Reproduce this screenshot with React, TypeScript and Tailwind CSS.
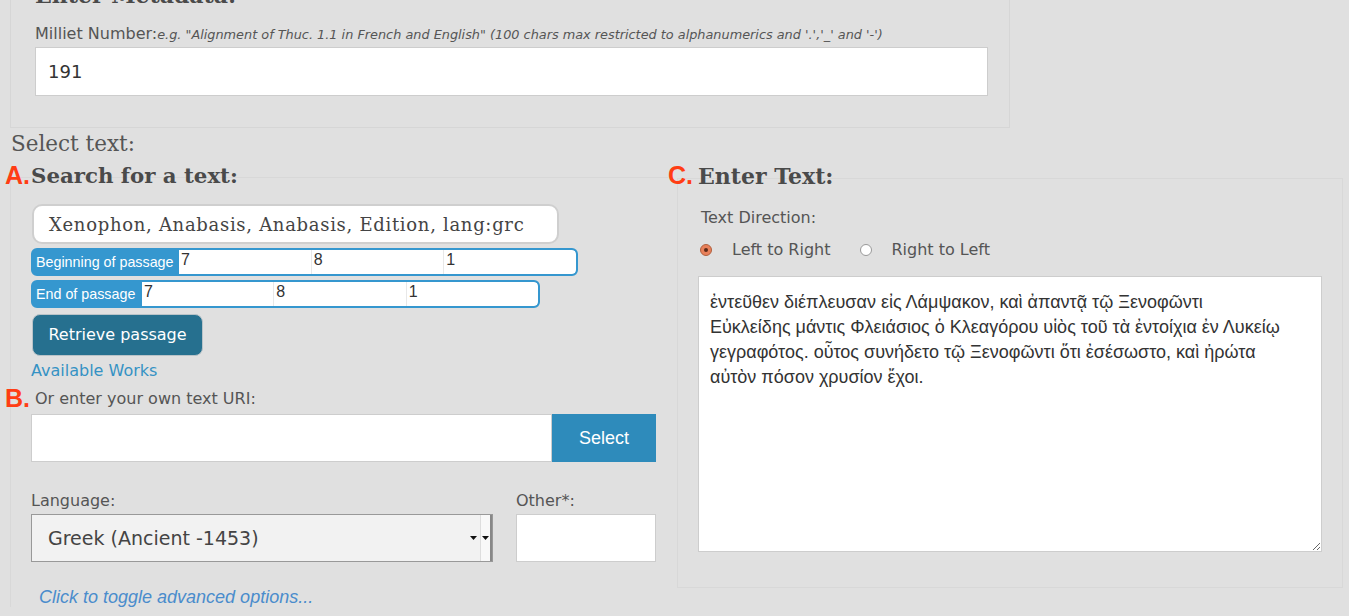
import React, { useState } from "react";

const sans = "font-['DejaVu_Sans',sans-serif]";
const serif = "font-['DejaVu_Serif',serif]";
const arial = "font-['Liberation_Sans',Arial,sans-serif]";

const greek = [
  "ἐντεῦθεν διέπλευσαν εἰς Λάμψακον, καὶ ἀπαντᾷ τῷ Ξενοφῶντι",
  "Εὐκλείδης μάντις Φλειάσιος ὁ Κλεαγόρου υἱὸς τοῦ τὰ ἐντοίχια ἐν Λυκείῳ",
  "γεγραφότος. οὗτος συνήδετο τῷ Ξενοφῶντι ὅτι ἐσέσωστο, καὶ ἠρώτα",
  "αὐτὸν πόσον χρυσίον ἔχοι.",
].join("\n");

// passage bar: label + three citation inputs
const PassageBar = ({ label, width, labelWidth, values }: { label: string; width: string; labelWidth: string; values: string[] }) => (
  <div className={`flex h-[28px] ${width} rounded-[6px] border-2 border-[#3597cf] bg-[#3597cf] overflow-hidden`}>
    <div className={`${labelWidth} shrink-0 flex items-end pb-[1px] pl-[3px] text-white text-[14.3px] ${arial}`}>{label}</div>
    <div className="flex flex-1 bg-white rounded-r-[4px]">
      {values.map((v, i) => (
        <div key={i} className={`flex-1 text-[16px] leading-[20px] pl-[2px] text-[#333] ${arial} ${i > 0 ? "border-l border-[#e8e8e8]" : ""}`}>
          {v}
        </div>
      ))}
    </div>
  </div>
);

const Letter = ({ children }: { children: string }) => (
  <span className={`text-[25px] font-bold text-[#ff3d14] ${arial}`}>{children}</span>
);

const Radio = ({ on }: { on: boolean }) => (
  <span className={`w-[12px] h-[12px] rounded-full border flex items-center justify-center ${on ? "bg-[#e8805a] border-[#b0603e]" : "bg-white border-[#999]"}`}>
    {on && <span className="w-[4px] h-[4px] rounded-full bg-[#5a2a18]" />}
  </span>
);

export default function App() {
  const [dir, setDir] = useState("ltr");

  return (
    <div className="flex flex-col w-full h-[616px] overflow-hidden bg-[#e0e0e0] text-[#555]">
      {/* metadata panel */}
      <div className="flex flex-col items-start ml-[10px] w-[1000px] h-[128px] shrink-0 border-x border-b border-[#d6d6d6] pl-[24px]">
        <h2 className={`-mt-[19px] h-[28px] leading-[28px] text-[22px] font-bold text-[#4a4a4a] ${serif}`}>Enter Metadata:</h2>
        <div className={`mt-[15px] h-[20px] leading-[20px] text-[16px] ${sans}`}>
          Milliet Number:
          <span className="italic text-[12.85px]">e.g. "Alignment of Thuc. 1.1 in French and English" (100 chars max restricted to alphanumerics and '.','_' and '-')</span>
        </div>
        <input
          defaultValue="191"
          className={`mt-[3px] h-[49px] w-[953px] bg-white border border-[#cdcdcd] px-[12px] text-[18px] text-[#333] ${sans} outline-none`}
        />
      </div>

      <div className={`mt-[4px] pl-[11px] h-[24px] leading-[24px] text-[21.5px] ${serif}`}>Select text:</div>

      <div className="flex mt-[6px]">
        {/* left column */}
        <div className="w-[668px] shrink-0">
          <div className="flex items-center h-[28px] pl-[5px]">
            <Letter>A.</Letter>
            <h3 className={`ml-[1px] text-[21.3px] font-bold text-[#4a4a4a] ${serif}`}>Search for a text:</h3>
          </div>
          <div className="ml-[10px] -mt-[13px] pt-[26px] pl-[20px] border-l border-t border-[#d8d8d8]">
            <div className={`ml-[1px] h-[40px] w-[527px] rounded-[10px] border-2 border-[#cfcfcf] bg-white pl-[15px] flex items-center text-[18px] tracking-[0.7px] text-[#444] ${serif}`}>
              Xenophon, Anabasis, Anabasis, Edition, lang:grc
            </div>
            <div className="mt-[4px]">
              <PassageBar label="Beginning of passage" width="w-[547px]" labelWidth="w-[146px]" values={["7", "8", "1"]} />
            </div>
            <div className="mt-[4px]">
              <PassageBar label="End of passage" width="w-[509px]" labelWidth="w-[109px]" values={["7", "8", "1"]} />
            </div>
            <button className={`mt-[6px] ml-[1px] h-[42px] w-[171px] rounded-[8px] border border-[#b9c3c8] bg-[#26708f] text-white text-[16px] ${sans}`}>
              Retrieve passage
            </button>
            <div className={`mt-[5px] h-[20px] leading-[20px] text-[16px] text-[#3592c4] ${sans}`}>Available Works</div>

            <div className="flex items-center mt-[7px] -ml-[26px] h-[22px]">
              <Letter>B.</Letter>
              <span className={`ml-[5px] text-[16px] ${sans}`}>Or enter your own text URI:</span>
            </div>
            <div className="flex mt-[4px]">
              <input className="h-[48px] w-[521px] bg-white border border-[#cdcdcd] outline-none" />
              <button className={`h-[48px] w-[104px] bg-[#2e8bbb] text-white text-[18px] ${arial}`}>Select</button>
            </div>

            <div className="flex mt-[29px]">
              <div className="w-[485px]">
                <div className={`h-[20px] leading-[20px] text-[16px] ${sans}`}>Language:</div>
                <div className="mt-[3px] h-[48px] w-[462px] flex items-stretch bg-[#f2f2f2] border border-[#999]">
                  <div className={`flex-1 flex items-center pl-[16px] text-[19px] text-[#444] ${sans}`}>Greek (Ancient -1453)</div>
                  <div className="flex items-center pr-[2px]">
                    <svg width="9" height="6" viewBox="0 0 9 6"><path d="M1 1h7L4.5 5z" fill="#111" /></svg>
                  </div>
                  <div className="w-[12px] flex items-center justify-center bg-[#f8f8f8] border-l border-[#ddd] border-r-2 border-r-[#888]">
                    <svg width="9" height="6" viewBox="0 0 9 6"><path d="M1 1h7L4.5 5z" fill="#111" /></svg>
                  </div>
                </div>
              </div>
              <div>
                <div className={`h-[20px] leading-[20px] text-[16px] ${sans}`}>Other*:</div>
                <input className="mt-[3px] h-[48px] w-[140px] bg-white border border-[#cdcdcd] outline-none" />
              </div>
            </div>

            <div className={`mt-[25px] ml-[8px] h-[20px] leading-[20px] italic text-[18px] text-[#4a8ccc] ${arial}`}>
              Click to toggle advanced options...
            </div>
          </div>
        </div>

        {/* right column */}
        <div className="flex-1">
          <div className="flex items-center h-[28px]">
            <Letter>C.</Letter>
            <h3 className={`ml-[5px] text-[22px] font-bold text-[#4a4a4a] ${serif}`}>Enter Text:</h3>
          </div>
          <div className="ml-[9px] mr-[6px] -mt-[12px] h-[410px] border border-[#d8d8d8] pl-[20px] pt-[29px]">
            <div className={`h-[20px] leading-[20px] text-[16px] pl-[3px] ${sans}`}>Text Direction:</div>
            <div className={`flex items-center mt-[11px] h-[22px] pl-[2px] text-[16px] ${sans}`}>
              <label className="flex items-center cursor-pointer" onClick={() => setDir("ltr")}>
                <Radio on={dir === "ltr"} />
                <span className="ml-[20px]">Left to Right</span>
              </label>
              <label className="flex items-center ml-[30px] cursor-pointer" onClick={() => setDir("rtl")}>
                <Radio on={dir === "rtl"} />
                <span className="ml-[19px]">Right to Left</span>
              </label>
            </div>
            <textarea
              defaultValue={greek}
              dir={dir}
              className={`mt-[15px] block h-[276px] w-[624px] bg-white border border-[#cdcdcd] px-[11px] pt-[13px] text-[18px] leading-[25px] text-[#333] ${arial} outline-none`}
            />
          </div>
        </div>
      </div>
    </div>
  );
}
